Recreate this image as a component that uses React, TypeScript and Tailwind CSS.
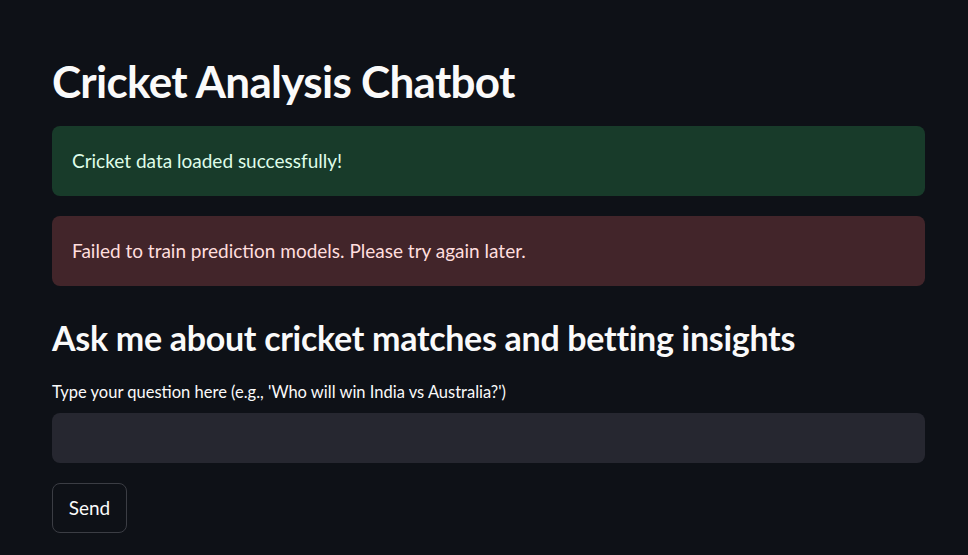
import React, { useState } from "react";

const FONT = { fontFamily: '"Lato", "Noto Sans", sans-serif' };

export default function App() {
  const [question, setQuestion] = useState("");

  return (
    <div className="min-h-screen w-full bg-[#0e1117] text-[#fafafa]" style={FONT}>
      <main className="ml-[52px] w-[873px] pt-[55px]">
        {/* Title */}
        <h1 className="text-[44px] leading-[52px] font-bold tracking-[-0.7px] text-[#fafafa]">
          Cricket Analysis Chatbot
        </h1>

        {/* Status alerts */}
        <div className="mt-[19px] flex flex-col gap-[20px]">
          <div className="h-[70px] rounded-lg bg-[#183b2a] px-5 flex items-center text-[19px] text-[#dffde9]">
            Cricket data loaded successfully!
          </div>
          <div className="h-[70px] rounded-lg bg-[#42252a] px-5 flex items-center text-[19px] text-[#ffdede]">
            Failed to train prediction models. Please try again later.
          </div>
        </div>

        {/* Question section */}
        <h2 className="mt-[30px] text-[34px] leading-[44px] font-bold tracking-[-0.3px] text-[#fafafa]">
          Ask me about cricket matches and betting insights
        </h2>

        <label className="mt-[22px] block text-[16.5px] leading-[20px] text-[#fafafa]">
          Type your question here (e.g., 'Who will win India vs Australia?')
        </label>
        <input
          value={question}
          onChange={(e) => setQuestion(e.target.value)}
          className="mt-[11px] block h-[50px] w-full rounded-lg bg-[#262730] px-4 text-[18px] text-[#fafafa] outline-none"
        />

        <button
          type="button"
          className="mt-[20px] h-[50px] w-[75px] rounded-lg border border-[#3b3d44] bg-transparent text-[19px] text-[#fafafa]"
        >
          Send
        </button>
      </main>
    </div>
  );
}
